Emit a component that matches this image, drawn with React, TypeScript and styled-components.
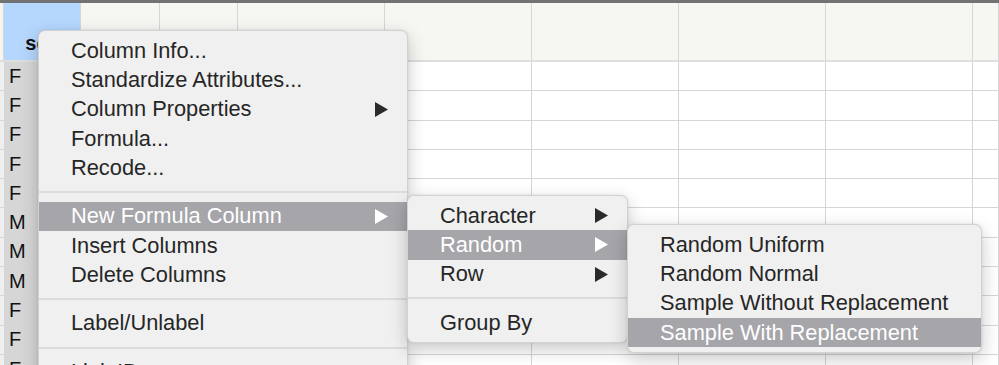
import React from 'react'
import styled, { createGlobalStyle } from 'styled-components'

const GlobalStyle = createGlobalStyle`
  html, body {
    margin: 0;
    padding: 0;
    background: #ffffff;
    overflow: hidden;
  }
  body {
    font-family: 'Liberation Sans', Arial, sans-serif;
  }
`

const COLUMNS = '4px 77px 79px 78px 147px 147px 147px 147px 147px 1fr'
const ROW_H = 29.3

const Stage = styled.div`
  position: relative;
  width: 999px;
  height: 365px;
  overflow: hidden;
  background: #ffffff;
`

const Sheet = styled.div`
  display: flex;
  flex-direction: column;
`

const TopBar = styled.div`
  height: 3px;
  background: #727272;
`

const Row = styled.div<{ $header?: boolean }>`
  display: grid;
  grid-template-columns: ${COLUMNS};
  height: ${({ $header }) => ($header ? '59px' : `${ROW_H}px`)};
  box-sizing: border-box;
  border-bottom: ${({ $header }) => ($header ? '2px solid #dedede' : '1px solid #d6d6d6')};
  background: ${({ $header }) => ($header ? '#f6f6f2' : '#ffffff')};
`

const Cell = styled.div<{ $selected?: boolean; $header?: boolean; $stub?: boolean }>`
  box-sizing: border-box;
  border-right: 1px solid #d6d6d6;
  display: flex;
  align-items: ${({ $header }) => ($header ? 'flex-end' : 'center')};
  justify-content: ${({ $header }) => ($header ? 'center' : 'flex-start')};
  padding: ${({ $header }) => ($header ? '0 0 5px' : '0 0 0 5px')};
  font-size: ${({ $header }) => ($header ? '20px' : '20px')};
  font-weight: ${({ $header }) => ($header ? 700 : 400)};
  color: #111111;
  overflow: hidden;
  white-space: nowrap;
  background: ${({ $selected, $header, $stub }) =>
    $stub ? ($header ? '#f4f4f0' : '#efefef') : $selected ? ($header ? '#b5d7fd' : '#d6d6d6') : 'transparent'};
`

const Menu = styled.div<{ $left: number; $top: number; $width: number; $z: number }>`
  position: absolute;
  left: ${({ $left }) => $left}px;
  top: ${({ $top }) => $top}px;
  width: ${({ $width }) => $width}px;
  z-index: ${({ $z }) => $z};
  box-sizing: border-box;
  padding: 5px 0;
  background: #f0f0f0;
  border: 1px solid rgba(0, 0, 0, 0.12);
  border-radius: 7px;
  box-shadow: 0 6px 18px rgba(0, 0, 0, 0.22), 0 0 3px rgba(0, 0, 0, 0.08);
  overflow: hidden;
`

const Item = styled.div<{ $active?: boolean }>`
  height: ${ROW_H}px;
  display: flex;
  align-items: center;
  justify-content: space-between;
  padding: 0 19px 0 32px;
  font-size: 21.8px;
  color: ${({ $active }) => ($active ? '#ffffff' : '#262626')};
  background: ${({ $active }) => ($active ? '#a5a5aa' : 'transparent')};
  white-space: nowrap;
`

const Separator = styled.div`
  height: 19.2px;
  display: flex;
  align-items: center;
  &::after {
    content: '';
    flex: 1;
    height: 2px;
    background: #dcdcdc;
  }
`

const Arrow = ({ active }: { active?: boolean }) => (
  <svg width="13" height="15" viewBox="0 0 13 15">
    <polygon points="0,0 13,7.5 0,15" fill={active ? '#ffffff' : '#2a2a2a'} />
  </svg>
)

type Entry = { label?: string; sub?: boolean; active?: boolean; sep?: boolean }

const mainItems: Entry[] = [
  { label: 'Column Info...' },
  { label: 'Standardize Attributes...' },
  { label: 'Column Properties', sub: true },
  { label: 'Formula...' },
  { label: 'Recode...' },
  { sep: true },
  { label: 'New Formula Column', sub: true, active: true },
  { label: 'Insert Columns' },
  { label: 'Delete Columns' },
  { sep: true },
  { label: 'Label/Unlabel' },
  { sep: true },
  { label: 'Link ID' },
  { label: 'Link Reference' },
]

const formulaItems: Entry[] = [
  { label: 'Character', sub: true },
  { label: 'Random', sub: true, active: true },
  { label: 'Row', sub: true },
  { sep: true },
  { label: 'Group By' },
]

const randomItems: Entry[] = [
  { label: 'Random Uniform' },
  { label: 'Random Normal' },
  { label: 'Sample Without Replacement' },
  { label: 'Sample With Replacement', active: true },
]

const sexValues = ['F', 'F', 'F', 'F', 'F', 'M', 'M', 'M', 'F', 'F', 'F']

const MenuList = ({ items }: { items: Entry[] }) => (
  <>
    {items.map((it, i) =>
      it.sep ? (
        <Separator key={i} />
      ) : (
        <Item key={i} $active={it.active}>
          <span>{it.label}</span>
          {it.sub && <Arrow active={it.active} />}
        </Item>
      )
    )}
  </>
)

const emptyCells = Array.from({ length: 8 })

const App = () => {
  return (
    <Stage>
      <GlobalStyle />
      <Sheet>
        <TopBar />
        <Row $header>
          <Cell $header $stub />
          <Cell $header $selected>
            sex
          </Cell>
          {emptyCells.map((_, i) => (
            <Cell key={i} $header />
          ))}
        </Row>
        {sexValues.map((v, r) => (
          <Row key={r}>
            <Cell $stub />
            <Cell $selected>{v}</Cell>
            {emptyCells.map((_, i) => (
              <Cell key={i} />
            ))}
          </Row>
        ))}
      </Sheet>

      <Menu $left={38} $top={30} $width={370} $z={1}>
        <MenuList items={mainItems} />
      </Menu>
      <Menu $left={407} $top={195} $width={221} $z={2}>
        <MenuList items={formulaItems} />
      </Menu>
      <Menu $left={627} $top={224} $width={355} $z={3}>
        <MenuList items={randomItems} />
      </Menu>
    </Stage>
  )
}

export default App
